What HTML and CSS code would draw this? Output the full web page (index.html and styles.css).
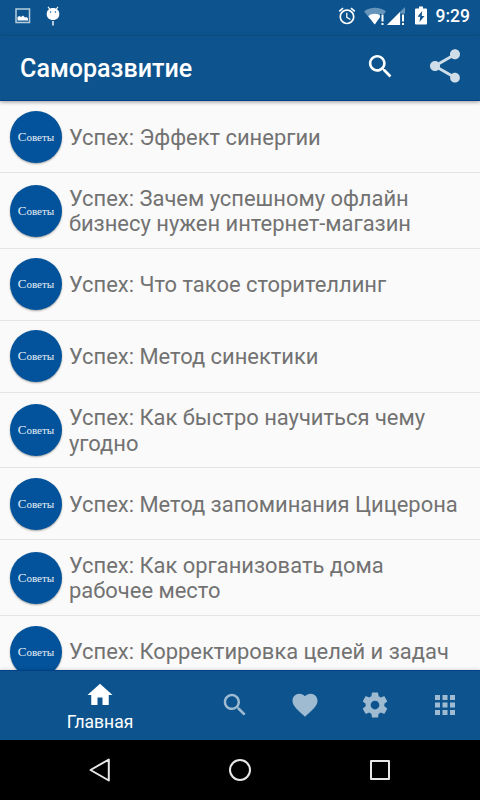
FILE: index.html
```html
<!DOCTYPE html>
<html lang="ru">
<head>
    <meta charset="UTF-8">
    <meta name="viewport" content="width=device-width, initial-scale=1.0">
    <title>Саморазвитие</title>
    <link rel="stylesheet" href="styles.css">
</head>
<body>
    <div class="app">
        <div class="status-bar">
            <svg class="status-photo" width="16" height="16" viewBox="0 0 16 16">
                <path d="M1 1h13.500v13.500H1z" fill="none" stroke="#b7cddd" stroke-width="1.500"/>
                <path d="M2.500 12.500V9l2-1 1.500 1L8 7.500l2 2 1.500-.5 1.500 1.500v2z" fill="#fff"/>
            </svg>
            <svg class="status-android" width="14" height="20" viewBox="0 0 14 20">
                <path d="M2 .8l2 2.700M12 .8l-2 2.700" stroke="#fff" stroke-width="1.100"/>
                <path d="M7 2c3.800 0 6.300 2.400 6.300 6 0 3.800-2.500 6-6.300 6S.7 11.800.7 8C.7 4.400 3.200 2 7 2z" fill="#fff"/>
                <path d="M6.300 15h1.400v4.500H6.300z" fill="#fff"/>
                <circle cx="4.600" cy="6" r=".7" fill="#0d548e"/>
                <circle cx="9.400" cy="6" r=".7" fill="#0d548e"/>
            </svg>
            <div class="status-right">
                <svg class="status-alarm" width="20" height="20" viewBox="0 0 24 24" fill="#fff">
                    <path d="M22 5.720l-4.600-3.860-1.290 1.530 4.600 3.860L22 5.720zM7.880 3.390L6.600 1.860 2 5.710l1.290 1.530 4.590-3.850zM12.500 8H11v6l4.750 2.850.75-1.230-4-2.370V8zM12 4c-4.970 0-9 4.030-9 9s4.020 9 9 9 9-4.030 9-9-4.030-9-9-9zm0 16c-3.870 0-7-3.130-7-7s3.130-7 7-7 7 3.130 7 7-3.130 7-7 7z"/>
                </svg>
                <svg class="status-wifi" width="22" height="19" viewBox="0 0 22 19">
                    <path d="M0 4.500C6-.5 16-.5 22 4.500l-2.500 3h-3.500L11 17.500z" fill="#6595bb"/>
                    <path d="M4.300 9.200c3.800-3.200 9.200-3.200 12.400 0L10.700 17.500z" fill="#fff"/>
                    <path d="M16 7h5v12h-5z" fill="#0d548e"/>
                    <path d="M17.500 7.500h2v7h-2zM17.500 16h2v2h-2z" fill="#fff"/>
                </svg>
                <svg class="status-signal" width="18" height="19" viewBox="0 0 18 19">
                    <path d="M18 0v18H0z" fill="#6595bb"/>
                    <path d="M13 5v13H0z" fill="#fff"/>
                    <path d="M13.300 6.500H18V19h-4.700z" fill="#0d548e"/>
                    <path d="M15 7.500h2v7h-2zM15 16h2v2h-2z" fill="#fff"/>
                </svg>
                <svg class="status-battery" width="12" height="19" viewBox="0 0 12 18">
                    <path d="M4 0h4v2h3q1 0 1 1v14q0 1-1 1H1q-1 0-1-1V3q0-1 1-1h3z" fill="#fff"/>
                    <path d="M7.200 4.500L2.500 10.300h2.700L4.500 15.500l5-6H6.700z" fill="#0d548e"/>
                </svg>
                <span class="clock">9:29</span>
            </div>
        </div>

        <div class="toolbar">
            <h1>Саморазвитие</h1>
            <svg class="toolbar-search" width="31" height="31" viewBox="0 0 24 24" fill="#fff">
                <path d="M15.500 14h-.79l-.28-.27C15.410 12.590 16 11.110 16 9.500 16 5.910 13.090 3 9.500 3S3 5.910 3 9.500 5.910 16 9.500 16c1.610 0 3.090-.59 4.230-1.570l.27.28v.79l5 4.990L20.490 19l-4.990-5zm-6 0C7.010 14 5 11.990 5 9.500S7.010 5 9.500 5 14 7.010 14 9.500 11.990 14 9.500 14z"/>
            </svg>
            <svg class="toolbar-share" width="40" height="40" viewBox="0 0 24 24" fill="#cfdde8">
                <path d="M18 16.080c-.76 0-1.440.3-1.960.77L8.910 12.700c.05-.23.09-.46.09-.7s-.04-.47-.09-.7l7.050-4.110c.54.5 1.250.81 2.040.81 1.660 0 3-1.340 3-3s-1.340-3-3-3-3 1.340-3 3c0 .24.04.47.09.7L8.040 9.810C7.500 9.310 6.790 9 6 9c-1.660 0-3 1.340-3 3s1.340 3 3 3c.79 0 1.500-.31 2.040-.81l7.120 4.160c-.05.21-.08.43-.08.65 0 1.610 1.310 2.920 2.920 2.920s2.920-1.310 2.920-2.920-1.310-2.920-2.920-2.920z"/>
            </svg>
        </div>

        <div class="list">
            <div class="item">
                <div class="avatar"><p>Советы</p></div>
                <div class="text">Успех: Эффект синергии</div>
            </div>
            <div class="item">
                <div class="avatar"><p>Советы</p></div>
                <div class="text">Успех: Зачем успешному офлайн<br>бизнесу нужен интернет-магазин</div>
            </div>
            <div class="item">
                <div class="avatar"><p>Советы</p></div>
                <div class="text">Успех: Что такое сторителлинг</div>
            </div>
            <div class="item">
                <div class="avatar"><p>Советы</p></div>
                <div class="text">Успех: Метод синектики</div>
            </div>
            <div class="item">
                <div class="avatar"><p>Советы</p></div>
                <div class="text">Успех: Как быстро научиться чему<br>угодно</div>
            </div>
            <div class="item">
                <div class="avatar"><p>Советы</p></div>
                <div class="text">Успех: Метод запоминания Цицерона</div>
            </div>
            <div class="item">
                <div class="avatar"><p>Советы</p></div>
                <div class="text">Успех: Как организовать дома<br>рабочее место</div>
            </div>
            <div class="item">
                <div class="avatar"><p>Советы</p></div>
                <div class="text">Успех: Корректировка целей и задач</div>
            </div>
        </div>

        <div class="tabs">
            <div class="tab active">
                <svg width="30" height="30" viewBox="0 0 24 24"><path d="M10 20v-6h4v6h5v-8h3L12 3 2 12h3v8z"/></svg>
                <span>Главная</span>
            </div>
            <div class="tab">
                <svg width="30" height="30" viewBox="0 0 24 24"><path d="M15.500 14h-.79l-.28-.27C15.410 12.590 16 11.110 16 9.500 16 5.910 13.090 3 9.500 3S3 5.910 3 9.500 5.910 16 9.500 16c1.610 0 3.090-.59 4.230-1.570l.27.28v.79l5 4.990L20.490 19l-4.990-5zm-6 0C7.010 14 5 11.990 5 9.500S7.010 5 9.500 5 14 7.010 14 9.500 11.990 14 9.500 14z"/></svg>
            </div>
            <div class="tab">
                <svg width="30" height="30" viewBox="0 0 24 24"><path d="M12 21.350l-1.450-1.320C5.400 15.360 2 12.280 2 8.500 2 5.420 4.420 3 7.500 3c1.740 0 3.410.81 4.500 2.090C13.090 3.810 14.760 3 16.500 3 19.580 3 22 5.420 22 8.500c0 3.780-3.400 6.860-8.550 11.540L12 21.350z"/></svg>
            </div>
            <div class="tab">
                <svg width="30" height="30" viewBox="0 0 24 24"><path d="M19.430 12.980c.04-.32.07-.64.07-.98s-.03-.66-.07-.98l2.110-1.650c.19-.15.24-.42.12-.64l-2-3.460c-.12-.22-.39-.3-.61-.22l-2.490 1c-.52-.4-1.080-.73-1.690-.98l-.38-2.650C14.460 2.180 14.250 2 14 2h-4c-.25 0-.46.18-.49.42l-.38 2.650c-.61.25-1.170.59-1.690.98l-2.490-1c-.23-.09-.49 0-.61.22l-2 3.460c-.13.22-.07.49.12.64l2.110 1.650c-.04.32-.07.65-.07.98s.03.66.07.98l-2.110 1.650c-.19.15-.24.42-.12.64l2 3.460c.12.22.39.3.61.22l2.490-1c.52.4 1.080.73 1.690.98l.38 2.650c.03.24.24.42.49.42h4c.25 0 .46-.18.49-.42l.38-2.650c.61-.25 1.170-.59 1.690-.98l2.490 1c.23.09.49 0 .61-.22l2-3.460c.12-.22.07-.49-.12-.64l-2.110-1.650zM12 15.500c-1.930 0-3.500-1.570-3.500-3.500s1.570-3.500 3.500-3.500 3.500 1.570 3.500 3.500-1.570 3.500-3.500 3.500z"/></svg>
            </div>
            <div class="tab">
                <svg width="30" height="30" viewBox="0 0 24 24"><path d="M4 8h4V4H4v4zm6 12h4v-4h-4v4zm-6 0h4v-4H4v4zm0-6h4v-4H4v4zm6 0h4v-4h-4v4zm6-10v4h4V4h-4zm-6 4h4V4h-4v4zm6 6h4v-4h-4v4zm0 6h4v-4h-4v4z"/></svg>
            </div>
        </div>

        <div class="nav-bar">
            <svg width="24" height="24" viewBox="0 0 24 24"><path d="M20.800 1.500v21L2.500 12z"/></svg>
            <svg width="24" height="24" viewBox="0 0 24 24"><circle cx="12" cy="12" r="10"/></svg>
            <svg width="24" height="24" viewBox="0 0 24 24"><path d="M3 3h18v18H3z"/></svg>
        </div>
    </div>
</body>
</html>
```
FILE: styles.css
```css
body {
    font-family: Roboto, sans-serif;
    margin: 0;
    background-color: #fafafa;
}
.app {
    display: flex;
    flex-direction: column;
    width: 480px;
    height: 800px;
    overflow: hidden;
}
.status-bar {
    display: flex;
    align-items: flex-start;
    height: 36px;
    padding: 0 10px 0 15px;
    box-sizing: border-box;
    background-color: #0d548e;
    color: white;
}
.status-photo {
    margin-top: 8px;
}
.status-android {
    margin: 6px 0 0 15px;
}
.status-right {
    display: flex;
    margin-left: auto;
}
.status-alarm {
    margin-top: 6px;
}
.status-wifi {
    margin: 7px 0 0 7px;
}
.status-signal {
    margin: 7px 0 0 1px;
}
.status-battery {
    margin: 6px 0 0 10px;
}
.clock {
    margin: 6px 0 0 9px;
    font-size: 17.5px;
    font-weight: 500;
    line-height: 21px;
}
.toolbar {
    display: flex;
    align-items: center;
    height: 65px;
    padding: 0 15px 5px 20px;
    box-sizing: border-box;
    background-color: #0d548e;
    border-bottom: 1px solid #004088;
    box-shadow: 0 1px 4px rgba(0, 0, 0, 0.4);
    position: relative;
    z-index: 1;
}
.toolbar h1 {
    flex: 1;
    margin: 5px 0 0;
    color: white;
    font-size: 25.1px;
    font-weight: 500;
}
.toolbar-search {
    margin: 1px 29px 0 0;
}
.toolbar-share {
    margin-top: 1px;
}
.list {
    flex: 1;
    min-height: 0;
    overflow: hidden;
}
.item {
    display: flex;
    align-items: center;
    min-height: 72px;
    padding: 12.6px 0 10.6px 10px;
    box-sizing: border-box;
    border-bottom: 1px solid #e4e4e4;
}
.avatar {
    display: flex;
    align-items: center;
    justify-content: center;
    flex-shrink: 0;
    width: 52px;
    height: 52px;
    margin: -3px 7px -1.5px 0;
    border-radius: 50%;
    background-color: #02539b;
    box-shadow: 0 1px 2px rgba(0, 0, 0, 0.35);
    color: #e6eef5;
    font-family: "Liberation Serif", serif;
    font-size: 11px;
}
.avatar p {
    margin: 0;
}
.avatar p::first-letter {
    font-size: 13px;
}
.text {
    color: #727272;
    font-size: 21.93px;
    line-height: 25.7px;
    white-space: nowrap;
}
.tabs {
    display: flex;
    height: 70px;
    box-sizing: border-box;
    background-color: #0d548e;
    border-top: 1px solid #004088;
    box-shadow: 0 -1px 3px rgba(0, 0, 0, 0.12);
    position: relative;
}
.tab {
    display: flex;
    align-items: center;
    justify-content: center;
    width: 70px;
    padding-bottom: 1px;
    box-sizing: border-box;
}
.tab svg {
    fill: #9fbbd2;
}
.tab.active {
    flex-direction: column;
    justify-content: flex-start;
    width: 200px;
    padding-top: 9px;
    color: white;
    font-size: 17.5px;
    line-height: 24px;
}
.tab.active svg {
    fill: white;
}
.nav-bar {
    display: flex;
    justify-content: center;
    align-items: center;
    gap: 116px;
    height: 60px;
    background-color: black;
}
.nav-bar svg {
    fill: none;
    stroke: #e8e8e8;
    stroke-width: 2;
    stroke-linejoin: round;
}
```
